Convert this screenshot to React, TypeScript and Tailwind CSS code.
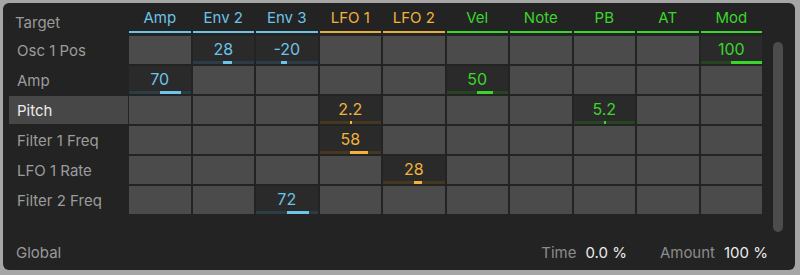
import React from 'react';

type Tone = 'blue' | 'orange' | 'green';

// classes por cor da fonte de modulação
const tones: Record<Tone, { text: string; bar: string; track: string; line: string }> = {
  blue: { text: 'text-[#6cc4e8]', bar: 'bg-[#6cc4e8]', track: 'bg-[#2c3c45]', line: 'bg-[#6cc4e8]' },
  orange: { text: 'text-[#f2b23c]', bar: 'bg-[#f2b23c]', track: 'bg-[#463820]', line: 'bg-[#e9ac3c]' },
  green: { text: 'text-[#3ad62b]', bar: 'bg-[#3ad62b]', track: 'bg-[#25441f]', line: 'bg-[#3ad62b]' },
};

const sources: { name: string; tone: Tone }[] = [
  { name: 'Amp', tone: 'blue' },
  { name: 'Env 2', tone: 'blue' },
  { name: 'Env 3', tone: 'blue' },
  { name: 'LFO 1', tone: 'orange' },
  { name: 'LFO 2', tone: 'orange' },
  { name: 'Vel', tone: 'green' },
  { name: 'Note', tone: 'green' },
  { name: 'PB', tone: 'green' },
  { name: 'AT', tone: 'green' },
  { name: 'Mod', tone: 'green' },
];

const targets = ['Osc 1 Pos', 'Amp', 'Pitch', 'Filter 1 Freq', 'LFO 1 Rate', 'Filter 2 Freq'];

// valores de modulação: target -> source -> valor
const amounts: Record<string, Record<string, number>> = {
  'Osc 1 Pos': { 'Env 2': 28, 'Env 3': -20, Mod: 100 },
  Amp: { Amp: 70, Vel: 50 },
  Pitch: { 'LFO 1': 2.2, PB: 5.2 },
  'Filter 1 Freq': { 'LFO 1': 58 },
  'LFO 1 Rate': { 'LFO 2': 28 },
  'Filter 2 Freq': { 'Env 3': 72 },
};

function Cell({ value, tone }: { value?: number; tone: Tone }) {
  if (value === undefined) {
    return <div className="h-[28px] bg-[#4b4b4b]" />;
  }
  const t = tones[tone];
  // barra bipolar a partir do centro
  const half = 50;
  const len = Math.max((Math.abs(value) / 100) * half, 2.5);
  const left = value >= 0 ? half : half - len;
  return (
    <div className="h-[28px] bg-[#2a2a2a] flex flex-col">
      <div className={`flex-1 flex items-center justify-center pt-[1px] text-[16px] ${t.text}`}>{value}</div>
      <div className={`relative h-[3px] ${t.track}`}>
        <div className={`absolute top-0 h-[3px] ${t.bar}`} style={{ left: `${left}%`, width: `${len}%` }} />
      </div>
    </div>
  );
}

export default function App() {
  return (
    <div className="w-[800px] h-[275px] bg-[#a6a6a6] pt-[3px] pl-[3px] font-['Inter',sans-serif]">
      <div className="w-[792px] h-[267px] rounded-[6px] bg-[#232323] flex flex-col">
        <div className="flex">
          <div className="pl-[6px]">
            {/* cabeçalho */}
            <div className="flex">
              <div className="w-[120px] h-[30px] pl-[6px] pt-[9px] text-[15px] text-[#9a9a9a]">Target</div>
              <div className="w-[633px] grid grid-cols-10 gap-x-[2px]">
                {sources.map((s) => (
                  <div key={s.name} className="flex flex-col">
                    <div className={`h-[28px] flex items-center justify-center pt-[2px] text-[15px] ${tones[s.tone].text}`}>
                      {s.name}
                    </div>
                    <div className={`h-[2px] ${tones[s.tone].line}`} />
                  </div>
                ))}
              </div>
            </div>

            {/* linhas */}
            <div className="mt-[3px] flex flex-col gap-y-[2px]">
              {targets.map((row) => (
                <div key={row} className="flex">
                  <div className="w-[120px]">
                    <div
                      className={
                        row === 'Pitch'
                          ? 'w-[119px] h-[28px] flex items-center pl-[8px] pt-[2px] text-[15px] bg-[#474747] text-[#ececec]'
                          : 'w-[119px] h-[28px] flex items-center pl-[8px] pt-[2px] text-[15px] text-[#9c9c9c]'
                      }
                    >
                      {row}
                    </div>
                  </div>
                  <div className="w-[633px] grid grid-cols-10 gap-x-[2px]">
                    {sources.map((s) => (
                      <Cell key={s.name} value={amounts[row]?.[s.name]} tone={s.tone} />
                    ))}
                  </div>
                </div>
              ))}
            </div>
          </div>

          {/* barra de rolagem */}
          <div className="ml-[11px] mt-[39px] w-[10px] h-[190px] rounded-full bg-[#4c4c4c]" />
        </div>

        {/* rodapé */}
        <div className="mt-auto mb-[6px] flex items-center text-[15px]">
          <div className="pl-[13px] text-[#9a9a9a]">Global</div>
          <div className="ml-auto flex items-center">
            <span className="text-[#8c8c8c]">Time</span>
            <span className="ml-[9px] text-[#ececec]">0.0 %</span>
            <span className="ml-[33px] text-[#8c8c8c]">Amount</span>
            <span className="ml-[9px] mr-[27px] text-[#ececec]">100 %</span>
          </div>
        </div>
      </div>
    </div>
  );
}
